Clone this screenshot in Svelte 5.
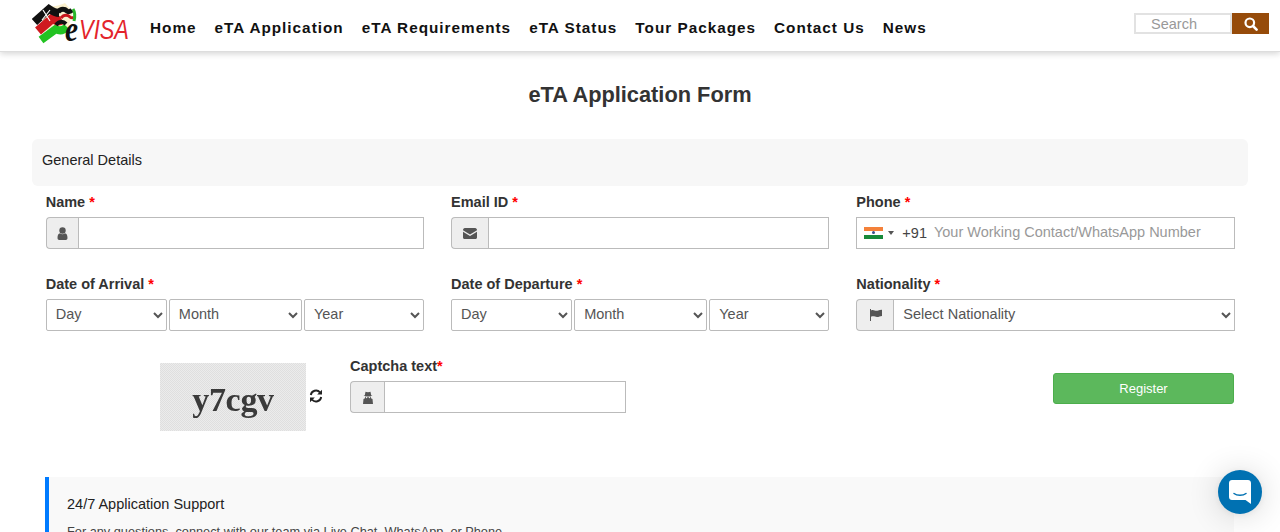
<script>
    const nav = ['Home', 'eTA Application', 'eTA Requirements', 'eTA Status', 'Tour Packages', 'Contact Us', 'News']
    const dates = [
        { label: 'Date of Arrival' },
        { label: 'Date of Departure' }
    ]
    const parts = ['Day', 'Month', 'Year']
</script>

<div class="page">
    <header class="topbar">
        <a class="logo" href="#top" aria-label="eVISA">
            <svg width="118" height="51" viewBox="0 0 118 51">
                <path d="M8 16 L17 6 C23 7 28 5 33 3 L41 12 L36 28 L16 34 Z" fill="#fbf1cf"/>
                <path d="M9 40 L24 29 C27 31 31 31 35 27" fill="none" stroke="#22c322" stroke-width="8"/>
                <path d="M6 31 L21 18 C23 20 26 22 30 20" fill="none" stroke="#cf1a1f" stroke-width="9"/>
                <path d="M2.500 22 L17 9 C20 11 23 13 27 13" fill="none" stroke="#111" stroke-width="8"/>
                <path d="M11 10 L18 21 M18 10 L10 20" stroke="#fff" stroke-width="1.200"/>
                <path d="M26 12 C29 8 33 9 35 11 C36 12 38 12 40 10" fill="none" stroke="#111" stroke-width="5"/>
                <path d="M29 18 C32 14 36 15 38 17 C39 18 41 18 42 17" fill="none" stroke="#c8161c" stroke-width="3"/>
                <path d="M24 25 C27 21 31 21 34 24" fill="none" stroke="#111" stroke-width="4"/>
                <path d="M41 9 C43 12 43 17 42 21" fill="none" stroke="#2bb52b" stroke-width="3"/>
                <text x="33" y="41" font-size="36" textLength="13" lengthAdjust="spacingAndGlyphs" class="logo-e">e</text>
                <text x="47" y="39" font-size="27" textLength="50" lengthAdjust="spacingAndGlyphs" class="logo-visa">VISA</text>
            </svg>
        </a>
        <nav class="mainnav">
            {#each nav as item}
                <a href="#top">{item}</a>
            {/each}
        </nav>
        <form class="search">
            <input type="text" placeholder="Search" />
            <button type="button" aria-label="Search">
                <svg width="14" height="14" viewBox="0 0 14 14">
                    <circle cx="5.800" cy="5.800" r="4.300" fill="none" stroke="#fff" stroke-width="2.200"/>
                    <path d="M9 9 L12.600 12.600" stroke="#fff" stroke-width="2.600" stroke-linecap="round"/>
                </svg>
            </button>
        </form>
    </header>

    <main class="content">
        <h1>eTA Application Form</h1>
        <div class="panel-head">General Details</div>

        <div class="form-row">
            <div class="field">
                <label for="name">Name <span class="req">*</span></label>
                <div class="group">
                    <span class="addon">
                        <svg width="11" height="13" viewBox="0 0 11 13"><circle cx="5.500" cy="3.500" r="3.200" fill="#555"/><path d="M0.500 11 C0.500 8 1.500 6.500 3 6.300 C4.500 7.500 6.500 7.500 8 6.300 C9.500 6.500 10.500 8 10.500 11 C10.500 12.300 9.800 13 8.800 13 L2.200 13 C1.200 13 0.500 12.300 0.500 11 Z" fill="#555"/></svg>
                    </span>
                    <input id="name" type="text" />
                </div>
            </div>
            <div class="field">
                <label for="email">Email ID <span class="req">*</span></label>
                <div class="group">
                    <span class="addon wide">
                        <svg width="14" height="11" viewBox="0 0 14 11"><path d="M0 2.200 C0 1 .8 0 1.800 0 L12.200 0 C13.200 0 14 1 14 2.200 L7 6.600 Z" fill="#555"/><path d="M0 3.700 L7 8 L14 3.700 L14 9.500 C14 10.400 13.300 11 12.500 11 L1.500 11 C.7 11 0 10.400 0 9.500 Z" fill="#555"/></svg>
                    </span>
                    <input id="email" type="text" />
                </div>
            </div>
            <div class="field">
                <label for="phone">Phone <span class="req">*</span></label>
                <div class="phone">
                    <span class="flag"><i class="saffron"></i><i class="white"><b></b></i><i class="green"></i></span>
                    <span class="caret"></span>
                    <span class="dial">+91</span>
                    <input id="phone" type="text" placeholder="Your Working Contact/WhatsApp Number" />
                </div>
            </div>
        </div>

        <div class="form-row">
            {#each dates as d}
                <div class="field">
                    <label for={d.label}>{d.label} <span class="req">*</span></label>
                    <div class="dates">
                        {#each parts as p, i}
                            <select id={i === 0 ? d.label : undefined}><option>{p}</option></select>
                        {/each}
                    </div>
                </div>
            {/each}
            <div class="field">
                <label for="nat">Nationality <span class="req">*</span></label>
                <div class="group">
                    <span class="addon wide">
                        <svg width="13" height="12" viewBox="0 0 13 12"><path d="M1 0 L2 0 L2 12 L1 12 Z" fill="#555"/><path d="M2 1.500 C4.500 0 6 2.400 8.500 1.700 C10 1.300 11.500 .8 13 .8 L13 7 C11 7.300 10 8 8 8 C6 8 4.500 6.500 2 7.800 Z" fill="#555"/></svg>
                    </span>
                    <select id="nat"><option>Select Nationality</option></select>
                </div>
            </div>
        </div>

        <div class="captcha-row">
            <div class="captcha-img"><span>y7cgv</span></div>
            <button class="refresh" type="button" aria-label="Refresh captcha">
                <svg width="14" height="14" viewBox="0 0 14 14" fill="none">
                    <path d="M1.800 6 A5.300 5.300 0 0 1 11 3.300" stroke="#222" stroke-width="1.900"/>
                    <path d="M13 0.800 L13 5.600 L8.200 5.600 Z" fill="#222"/>
                    <path d="M12.200 8 A5.300 5.300 0 0 1 3 10.700" stroke="#222" stroke-width="1.900"/>
                    <path d="M1 13.200 L1 8.400 L5.800 8.400 Z" fill="#222"/>
                </svg>
            </button>
            <div class="field captcha-field">
                <label for="cap">Captcha text<span class="req">*</span></label>
                <div class="group">
                    <span class="addon cap">
                        <svg width="10" height="13" viewBox="0 0 10 13"><path d="M2.500 .8 C3.500 1.400 6.500 1.400 7.500 .8 L8.200 4.300 L9.500 5 L.5 5 L1.800 4.300 Z" fill="#555"/><path d="M2.200 5.500 L7.800 5.500 L8 7.300 L9.500 8 L10 13 L0 13 L.5 8 L2 7.300 Z" fill="#555"/><circle cx="3.600" cy="6.500" r=".8" fill="#eee"/><circle cx="6.400" cy="6.500" r=".8" fill="#eee"/></svg>
                    </span>
                    <input id="cap" type="text" />
                </div>
            </div>
            <button class="register" type="button">Register</button>
        </div>

        <section class="support">
            <h2>24/7 Application Support</h2>
            <p>For any questions, connect with our team via Live Chat, WhatsApp, or Phone.</p>
        </section>
    </main>

    <button class="chat" type="button" aria-label="Open chat">
        <svg width="22" height="24" viewBox="0 0 22 24">
            <path d="M3 0 L19 0 C20.700 0 22 1.300 22 3 L22 24 L16.500 20 L3 20 C1.300 20 0 18.700 0 17 L0 3 C0 1.300 1.300 0 3 0 Z" fill="#fff"/>
            <path d="M5 13.500 C8 15.800 14 15.800 17 13.500" fill="none" stroke="#0071b2" stroke-width="1.500" stroke-linecap="round"/>
        </svg>
    </button>
</div>

<style>
    :global(html), :global(body) {
        overflow: hidden;
    }
    .page {
        height: 532px;
        overflow: hidden;
        position: relative;
        font-family: "Liberation Sans", Arial, sans-serif;
        color: #333;
        background: #fff;
    }
    .topbar {
        height: 52px;
        box-sizing: border-box;
        display: flex;
        align-items: center;
        padding: 0 11px 0 32px;
        background: #fff;
        border-bottom: 1px solid #ddd;
        box-shadow: 0 2px 6px rgba(0,0,0,.16);
    }
    .logo {
        width: 118px;
        height: 51px;
        flex: none;
    }
    .logo svg {
        display: block;
    }
    .logo-e {
        font-family: "Liberation Serif", serif;
        font-style: italic;
        font-weight: bold;
        fill: #111;
    }
    .logo-visa {
        font-family: "Liberation Sans", sans-serif;
        font-style: italic;
        fill: #e3242b;
    }
    .mainnav {
        display: flex;
        gap: 18px;
        margin-top: 4px;
    }
    .mainnav a {
        font: bold 15.300px "Liberation Sans", Arial, sans-serif;
        letter-spacing: 1px;
        color: #111;
        text-decoration: none;
    }
    .search {
        display: flex;
        margin-left: auto;
        margin-top: -4px;
        height: 21px;
    }
    .search input {
        width: 98px;
        box-sizing: border-box;
        border: 2px solid #e2e2e2;
        padding: 0 0 0 15px;
        font: 14.500px "Liberation Sans", sans-serif;
        outline: none;
    }
    .search input::placeholder {
        color: #999;
    }
    .search button {
        width: 37px;
        border: 0;
        padding: 0;
        background: #964b0a;
        display: flex;
        align-items: center;
        justify-content: center;
    }
    .content {
        padding: 0 32px;
    }
    h1 {
        margin: 0 0 30px;
        padding-top: 29px;
        height: 57px;
        box-sizing: border-box;
        font-size: 21.800px;
        line-height: 28px;
        text-align: center;
        color: #333;
    }
    .panel-head {
        height: 47px;
        box-sizing: border-box;
        padding: 13px 10px;
        font-size: 14.500px;
        line-height: 17px;
        color: #222;
        background: #f7f7f7;
        border-radius: 6px;
        margin-bottom: 6px;
    }
    .form-row {
        display: grid;
        grid-template-columns: repeat(3, 1fr);
        margin-bottom: 25px;
    }
    .field {
        padding: 0 13.300px 0 13.700px;
        min-width: 0;
    }
    label {
        display: block;
        font-size: 14.500px;
        font-weight: bold;
        line-height: 20px;
        color: #333;
        margin-bottom: 5px;
    }
    .req {
        color: #f00;
    }
    .group {
        display: flex;
        height: 32px;
    }
    .addon {
        width: 32.500px;
        flex: none;
        box-sizing: border-box;
        display: flex;
        align-items: center;
        justify-content: center;
        background: #eee;
        border: 1px solid #bbb;
        border-right: 0;
        border-radius: 4px 0 0 4px;
    }
    .addon.wide {
        width: 37px;
    }
    .addon.cap {
        width: 34px;
    }
    input, select {
        font-family: "Liberation Sans", Arial, sans-serif;
    }
    .group input, .group select {
        flex: 1;
        min-width: 0;
        box-sizing: border-box;
        height: 32px;
        border: 1px solid #bbb;
        background: #fff;
        border-radius: 0;
        outline: none;
    }
    .group select, .dates select {
        font-size: 14.500px;
        color: #555;
        padding: 0 0 2px 5px;
    }
    .dates {
        display: grid;
        grid-template-columns: 121fr 133fr 120fr;
        gap: 2px;
    }
    .dates select {
        min-width: 0;
        width: 100%;
        height: 32px;
        box-sizing: border-box;
        border: 1px solid #bbb;
        border-radius: 2px;
        background: #fff;
    }
    .phone {
        height: 32px;
        box-sizing: border-box;
        display: flex;
        align-items: center;
        border: 1px solid #bbb;
        padding-left: 7px;
    }
    .flag {
        width: 19px;
        height: 13px;
        flex: none;
        display: flex;
        flex-direction: column;
    }
    .flag i {
        flex: 1;
        display: flex;
        align-items: center;
        justify-content: center;
    }
    .flag .saffron { background: #f4813a; }
    .flag .white { background: #fff; }
    .flag .green { background: #178a3a; }
    .flag b {
        width: 3px;
        height: 3px;
        border-radius: 50%;
        background: #3a4f8a;
    }
    .caret {
        margin-left: 5px;
        width: 0;
        height: 0;
        border: 3px solid transparent;
        border-top: 4px solid #555;
        border-bottom: 0;
    }
    .dial {
        margin-left: 8px;
        padding-bottom: 1px;
        font-size: 14.500px;
        color: #444;
    }
    .phone input {
        flex: 1;
        min-width: 0;
        height: 100%;
        box-sizing: border-box;
        border: 0;
        outline: none;
        padding: 0 0 2px 7px;
        font-size: 14.500px;
    }
    .phone input::placeholder {
        color: #999;
    }
    .captcha-row {
        display: flex;
        align-items: flex-start;
        height: 121px;
        padding-left: 128px;
    }
    .captcha-img {
        width: 146px;
        height: 68px;
        margin-top: 7px;
        flex: none;
        display: flex;
        align-items: center;
        justify-content: center;
        background: repeating-conic-gradient(#dfdfdf 0 25%, #ececec 0 50%) 0 0 / 2px 2px;
    }
    .captcha-img span {
        font: bold 34px "Liberation Serif", serif;
        letter-spacing: -.3px;
        color: #3a3a3a;
        filter: blur(.6px);
        margin-top: 6px;
    }
    .refresh {
        flex: none;
        width: 14px;
        height: 14px;
        padding: 0;
        border: 0;
        background: none;
        margin: 33px 0 0 3px;
        display: flex;
    }
    .captcha-field {
        width: 276px;
        flex: none;
        margin-left: 27px;
        padding: 0;
    }
    .register {
        margin: 17px 14px 0 auto;
        width: 181px;
        height: 31px;
        flex: none;
        background: #5cb85c;
        border: 1px solid #4cae4c;
        border-radius: 3px;
        color: #fff;
        font: 13px "Liberation Sans", sans-serif;
    }
    .support {
        margin: 0 14px 0 13px;
        box-sizing: border-box;
        height: 120px;
        padding: 18px 18px;
        background: #f9f9f9;
        border-left: 4px solid #007bff;
    }
    .support h2 {
        margin: 0 0 10px;
        font-size: 14.500px;
        line-height: 18px;
        font-weight: normal;
        color: #222;
    }
    .support p {
        margin: 0;
        font-size: 12.750px;
        line-height: 18px;
        color: #444;
    }
    .chat {
        position: absolute;
        left: 1218px;
        top: 470px;
        width: 44px;
        height: 44px;
        border: 0;
        padding: 0;
        border-radius: 50%;
        background: #0071b2;
        box-shadow: 0 1px 6px rgba(0,0,0,.06), 0 2px 32px rgba(0,0,0,.16);
        display: flex;
        align-items: center;
        justify-content: center;
    }
</style>
